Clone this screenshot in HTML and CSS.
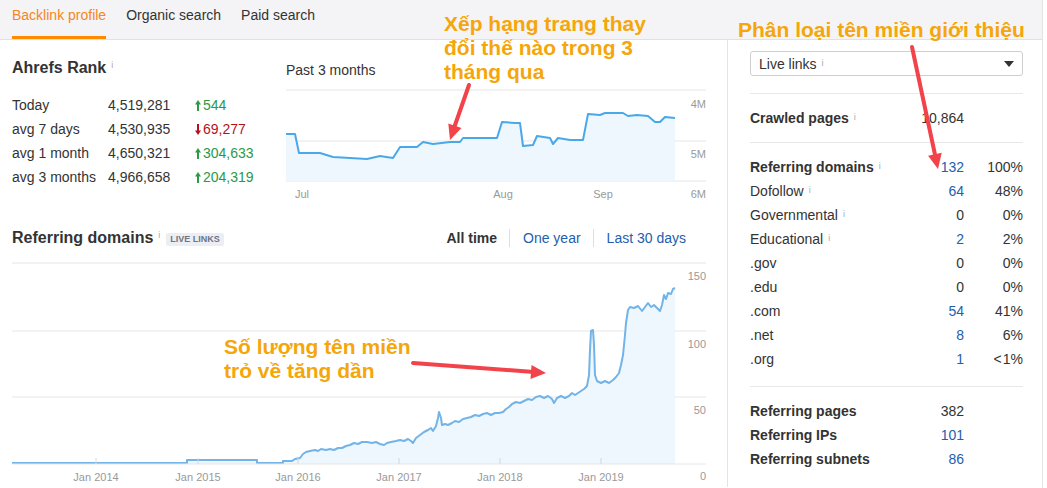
FILE: index.html
```html
<!DOCTYPE html>
<html lang="vi">
<head>
  <meta charset="UTF-8" />
  <title>Backlink profile</title>
  <meta name="viewport" content="width=device-width, initial-scale=1.0">
  <link rel="stylesheet" href="styles.css">
</head>
<body>
<div class="app">
  <div class="tabs">
    <a class="tab active">Backlink profile</a>
    <a class="tab">Organic search</a>
    <a class="tab">Paid search</a>
  </div>

  <div class="content">
    <div class="main">
      <div class="rank">
        <div class="rank-stats">
          <h2>Ahrefs Rank<span class="info">i</span></h2>
          <div class="rank-table">
            <span>Today</span><span>4,519,281</span>
            <span class="up"><svg class="arr" viewBox="0 0 6 11"><path d="M3 0 L6 4.5 L4 4.5 L4 11 L2 11 L2 4.5 L0 4.5 Z"/></svg>544</span>
            <span>avg 7 days</span><span>4,530,935</span>
            <span class="down"><svg class="arr" viewBox="0 0 6 11"><path d="M3 11 L6 6.5 L4 6.5 L4 0 L2 0 L2 6.5 L0 6.5 Z"/></svg>69,277</span>
            <span>avg 1 month</span><span>4,650,321</span>
            <span class="up"><svg class="arr" viewBox="0 0 6 11"><path d="M3 0 L6 4.5 L4 4.5 L4 11 L2 11 L2 4.5 L0 4.5 Z"/></svg>304,633</span>
            <span>avg 3 months</span><span>4,966,658</span>
            <span class="up"><svg class="arr" viewBox="0 0 6 11"><path d="M3 0 L6 4.5 L4 4.5 L4 11 L2 11 L2 4.5 L0 4.5 Z"/></svg>204,319</span>
          </div>
        </div>

        <div class="rank-chart">
          <div class="chart-label">Past 3 months</div>
          <svg class="rank-svg" width="420" height="116" viewBox="0 0 420 116">
            <line class="grid" x1="0" y1="5" x2="420" y2="5"/>
            <line class="grid" x1="0" y1="56" x2="420" y2="56"/>
            <line class="grid" x1="0" y1="96" x2="420" y2="96"/>
            <path class="area" d="M0,49 L9,49 L13,68 L34,68 L47,72 L81,74 L94,71 L107,73 L114,62 L131,62 L137,57 L147,59 L164,57 L174,57 L177,53 L211,53 L216,37 L229,38 L234,38 L237,61 L247,60 L251,51 L264,53 L267,59 L272,53 L284,55 L297,55 L302,29 L314,30 L319,28 L337,28 L342,31 L351,30 L362,31 L369,37 L374,37 L379,32 L389,33 L389,96 L0,96 Z"/>
            <path class="line" d="M0,49 L9,49 L13,68 L34,68 L47,72 L81,74 L94,71 L107,73 L114,62 L131,62 L137,57 L147,59 L164,57 L174,57 L177,53 L211,53 L216,37 L229,38 L234,38 L237,61 L247,60 L251,51 L264,53 L267,59 L272,53 L284,55 L297,55 L302,29 L314,30 L319,28 L337,28 L342,31 L351,30 L362,31 L369,37 L374,37 L379,32 L389,33"/>
            <text class="axis" x="420" y="23" text-anchor="end">4M</text>
            <text class="axis" x="420" y="73" text-anchor="end">5M</text>
            <text class="axis" x="420" y="113" text-anchor="end">6M</text>
            <text class="axis" x="16" y="113" text-anchor="middle">Jul</text>
            <text class="axis" x="217" y="113" text-anchor="middle">Aug</text>
            <text class="axis" x="317" y="113" text-anchor="middle">Sep</text>
          </svg>
        </div>
      </div>

      <div class="domains-head">
        <h2>Referring domains<span class="info">i</span><span class="badge">LIVE LINKS</span></h2>
        <div class="periods">
          <a class="period current">All time</a>
          <a class="period">One year</a>
          <a class="period">Last 30 days</a>
        </div>
      </div>

      <svg class="domains-svg" width="694" height="230" viewBox="0 0 694 230">
        <line class="grid" x1="0" y1="8" x2="694" y2="8"/>
        <line class="grid" x1="0" y1="76" x2="694" y2="76"/>
        <line class="grid" x1="0" y1="142" x2="694" y2="142"/>
        <path class="area" d="M0,208 L175,208 L175,205 L245,205 L245,208 L271,208 L271,206 L280,206 L283,204 L288,203 L291,199 L294,197 L298,196 L303,195 L306,196 L309,194 L314,195 L318,194 L322,195 L326,193 L330,193 L334,191 L338,190 L342,188 L346,189 L350,187 L355,187 L360,188 L364,187 L368,189 L372,190 L375,188 L379,187 L384,186 L388,185 L392,186 L396,184 L399,186 L401,188 L404,183 L408,180 L412,177 L416,175 L419,173 L421,176 L424,171 L426,163 L427,157 L429,163 L430,170 L433,169 L436,170 L440,168 L443,166 L447,167 L451,164 L455,163 L459,162 L463,160 L467,161 L471,159 L475,158 L479,160 L483,158 L487,158 L491,157 L494,154 L497,152 L500,149 L504,147 L508,148 L512,146 L516,144 L520,145 L524,142 L528,141 L532,143 L536,141 L540,144 L542,148 L545,143 L549,141 L553,143 L557,141 L560,138 L563,140 L566,138 L569,136 L572,134 L575,131 L577,120 L578,95 L579,76 L581,75 L582,90 L583,120 L585,126 L589,128 L593,126 L597,128 L601,125 L604,122 L607,118 L609,110 L611,100 L612,90 L613,80 L614,68 L616,55 L618,52 L622,53 L626,51 L630,56 L633,52 L636,48 L639,52 L642,50 L645,53 L648,56 L650,50 L652,40 L654,44 L656,38 L659,39 L661,34 L663,33 L663,209 L0,209 Z"/>
        <path class="line light" d="M0,208 L175,208 L175,205 L245,205 L245,208 L271,208 L271,206 L280,206 L283,204 L288,203 L291,199 L294,197 L298,196 L303,195 L306,196 L309,194 L314,195 L318,194 L322,195 L326,193 L330,193 L334,191 L338,190 L342,188 L346,189 L350,187 L355,187 L360,188 L364,187 L368,189 L372,190 L375,188 L379,187 L384,186 L388,185 L392,186 L396,184 L399,186 L401,188 L404,183 L408,180 L412,177 L416,175 L419,173 L421,176 L424,171 L426,163 L427,157 L429,163 L430,170 L433,169 L436,170 L440,168 L443,166 L447,167 L451,164 L455,163 L459,162 L463,160 L467,161 L471,159 L475,158 L479,160 L483,158 L487,158 L491,157 L494,154 L497,152 L500,149 L504,147 L508,148 L512,146 L516,144 L520,145 L524,142 L528,141 L532,143 L536,141 L540,144 L542,148 L545,143 L549,141 L553,143 L557,141 L560,138 L563,140 L566,138 L569,136 L572,134 L575,131 L577,120 L578,95 L579,76 L581,75 L582,90 L583,120 L585,126 L589,128 L593,126 L597,128 L601,125 L604,122 L607,118 L609,110 L611,100 L612,90 L613,80 L614,68 L616,55 L618,52 L622,53 L626,51 L630,56 L633,52 L636,48 L639,52 L642,50 L645,53 L648,56 L650,50 L652,40 L654,44 L656,38 L659,39 L661,34 L663,33"/>
        <line class="axis-line" x1="0" y1="209" x2="694" y2="209"/>
        <line class="tick" x1="84" y1="203" x2="84" y2="209"/>
        <line class="tick" x1="186" y1="203" x2="186" y2="209"/>
        <line class="tick" x1="286" y1="203" x2="286" y2="209"/>
        <line class="tick" x1="387" y1="203" x2="387" y2="209"/>
        <line class="tick" x1="488" y1="203" x2="488" y2="209"/>
        <line class="tick" x1="589" y1="203" x2="589" y2="209"/>
        <text class="axis" x="694" y="25" text-anchor="end">150</text>
        <text class="axis" x="694" y="93" text-anchor="end">100</text>
        <text class="axis" x="694" y="159" text-anchor="end">50</text>
        <text class="axis" x="694" y="225" text-anchor="end">0</text>
        <text class="axis" x="84" y="226" text-anchor="middle">Jan 2014</text>
        <text class="axis" x="186" y="226" text-anchor="middle">Jan 2015</text>
        <text class="axis" x="286" y="226" text-anchor="middle">Jan 2016</text>
        <text class="axis" x="387" y="226" text-anchor="middle">Jan 2017</text>
        <text class="axis" x="488" y="226" text-anchor="middle">Jan 2018</text>
        <text class="axis" x="589" y="226" text-anchor="middle">Jan 2019</text>
      </svg>
    </div>

    <div class="side">
      <div class="select">
        <span>Live links<span class="info">i</span></span>
        <span class="caret"></span>
      </div>

      <div class="stats">
        <span class="label strong">Crawled pages<span class="info">i</span></span><span class="num">10,864</span><span></span>
      </div>

      <div class="stats">
        <span class="label strong">Referring domains<span class="info">i</span></span><span class="num link">132</span><span class="pct">100%</span>
        <span class="label">Dofollow<span class="info">i</span></span><span class="num link">64</span><span class="pct">48%</span>
        <span class="label">Governmental<span class="info">i</span></span><span class="num">0</span><span class="pct">0%</span>
        <span class="label">Educational<span class="info">i</span></span><span class="num link">2</span><span class="pct">2%</span>
        <span class="label">.gov</span><span class="num">0</span><span class="pct">0%</span>
        <span class="label">.edu</span><span class="num">0</span><span class="pct">0%</span>
        <span class="label">.com</span><span class="num link">54</span><span class="pct">41%</span>
        <span class="label">.net</span><span class="num link">8</span><span class="pct">6%</span>
        <span class="label">.org</span><span class="num link">1</span><span class="pct">&lt;&#8202;1%</span>
      </div>

      <div class="stats last">
        <span class="label strong">Referring pages</span><span class="num">382</span><span></span>
        <span class="label strong">Referring IPs</span><span class="num link">101</span><span></span>
        <span class="label strong">Referring subnets</span><span class="num link">86</span><span></span>
      </div>
    </div>
  </div>

  <!-- annotations drawn on top of the screenshot -->
  <div class="note note-rank">Xếp hạng trang thay<br>đổi thế nào trong 3<br>tháng qua</div>
  <div class="note note-side">Phân loại tên miền giới thiệu</div>
  <div class="note note-domains">Số lượng tên miền<br>trỏ về tăng dần</div>

  <svg class="arrows" width="1047" height="488" viewBox="0 0 1047 488">
    <line x1="469" y1="85" x2="454" y2="128"/>
    <polygon points="450,140 461.5,128.1 448.3,123.5"/>
    <line x1="912" y1="47" x2="935.5" y2="157"/>
    <polygon points="938,169 941.7,152.8 928.1,155.8"/>
    <line x1="413" y1="363" x2="534" y2="372"/>
    <polygon points="546,373 530.5,378.9 531.5,364.9"/>
  </svg>
</div>
</body>
</html>
```

FILE: styles.css
```css
* {
  box-sizing: border-box;
}
html, body {
  margin: 0;
  height: 100%;
  overflow: hidden;
}
body {
  font-family: "Liberation Sans", Arial, sans-serif;
  font-size: 14px;
  color: #333;
  background: #fff;
}
.app {
  position: relative;
  width: 1043px;
  height: 488px;
  border-right: 1px solid #e4e4e4;
}

/* top tabs */
.tabs {
  display: flex;
  align-items: flex-end;
  gap: 20px;
  height: 40px;
  padding: 0 12px;
  background: #f4f4f6;
  border-bottom: 1px solid #e1e1e3;
}
.tab {
  padding: 6px 0 12px;
  line-height: 18px;
  border-bottom: 3px solid transparent;
  color: #333;
}
.tab.active {
  color: #f7861c;
  border-bottom-color: #ff8a00;
}

.content {
  display: flex;
  height: 447px;
}
.main {
  width: 727px;
  padding: 0 21px 0 12px;
}
.info {
  font-size: 9px;
  font-weight: normal;
  color: #a8a8a8;
  vertical-align: 3px;
  margin-left: 5px;
  line-height: 1;
}
h2 .info {
  vertical-align: 5px;
}
h2 {
  margin: 0;
  font-size: 16px;
  line-height: 18px;
  font-weight: bold;
  color: #333;
}

/* ahrefs rank */
.rank {
  display: flex;
  margin-top: 19px;
}
.rank-stats {
  width: 274px;
}
.rank-table {
  display: grid;
  grid-template-columns: 96px 87px auto;
  line-height: 24px;
  margin-top: 16px;
}
.arr {
  width: 6px;
  height: 11px;
  margin-right: 2px;
  vertical-align: -1px;
}
.up {
  color: #2a9a47;
  fill: #2a9a47;
}
.down {
  color: #b5121b;
  fill: #b5121b;
}
.rank-chart {
  width: 420px;
}
.chart-label {
  line-height: 18px;
  margin-top: 2px;
}
.rank-svg {
  display: block;
  margin-top: 6px;
}
.grid, .axis-line {
  stroke: #e6e6e6;
  stroke-width: 1;
}
.tick {
  stroke: #d8d8d8;
  stroke-width: 1;
}
.area {
  fill: #eef6fe;
}
.line {
  fill: none;
  stroke: #4aa8e8;
  stroke-width: 2;
  stroke-linejoin: round;
}
.line.light {
  stroke: #72b4e8;
}
.axis {
  font-size: 11px;
  fill: #999;
  font-family: "Liberation Sans", Arial, sans-serif;
}

/* referring domains chart */
.domains-head {
  display: flex;
  justify-content: space-between;
  align-items: center;
  margin-top: 28px;
  padding-right: 20px;
  height: 18px;
}
.badge {
  display: inline-block;
  margin-left: 6px;
  padding: 0 4px;
  height: 13px;
  line-height: 13px;
  font-size: 9px;
  font-weight: bold;
  color: #6f7585;
  background: #eceef3;
  border-radius: 2px;
  vertical-align: 1px;
}
.periods {
  display: flex;
}
.period {
  padding: 0 12px 0 13px;
  line-height: 18px;
  color: #2360ae;
  border-left: 1px solid #dedede;
}
.period.current {
  font-weight: bold;
  color: #333;
  border-left: none;
  padding-left: 0;
}
.period:last-child {
  padding-right: 0;
}
.domains-svg {
  display: block;
  margin-top: 8px;
}

/* right column */
.side {
  width: 315px;
  border-left: 1px solid #e4e4e4;
  padding: 11px 19px 0 22px;
}
.select {
  display: flex;
  justify-content: space-between;
  align-items: center;
  height: 25px;
  padding: 0 8px;
  border: 1px solid #cfcfcf;
  border-radius: 3px;
}
.caret {
  width: 0;
  height: 0;
  border-left: 5px solid transparent;
  border-right: 5px solid transparent;
  border-top: 6px solid #333;
}
.stats {
  display: grid;
  grid-template-columns: 1fr 60px 59px;
  line-height: 24px;
  border-top: 1px solid #e8e8e8;
  padding: 12px 0 12px;
}
.select + .stats {
  margin-top: 17px;
}
.stats:nth-child(3) {
  padding-bottom: 15px;
}
.stats .strong {
  font-weight: bold;
}
.num, .pct {
  text-align: right;
}
.link {
  color: #2360ae;
}

/* annotations */
.note {
  position: absolute;
  font-size: 21px;
  line-height: 24px;
  font-weight: bold;
  color: #f5a60a;
  white-space: nowrap;
}
.note-rank {
  left: 444px;
  top: 12px;
}
.note-side {
  left: 738px;
  top: 18px;
}
.note-domains {
  left: 224px;
  top: 335px;
}
.arrows {
  position: absolute;
  left: 0;
  top: 0;
  pointer-events: none;
}
.arrows line {
  stroke: #f2434a;
  stroke-width: 4;
  stroke-linecap: round;
}
.arrows polygon {
  fill: #f2434a;
}
```
